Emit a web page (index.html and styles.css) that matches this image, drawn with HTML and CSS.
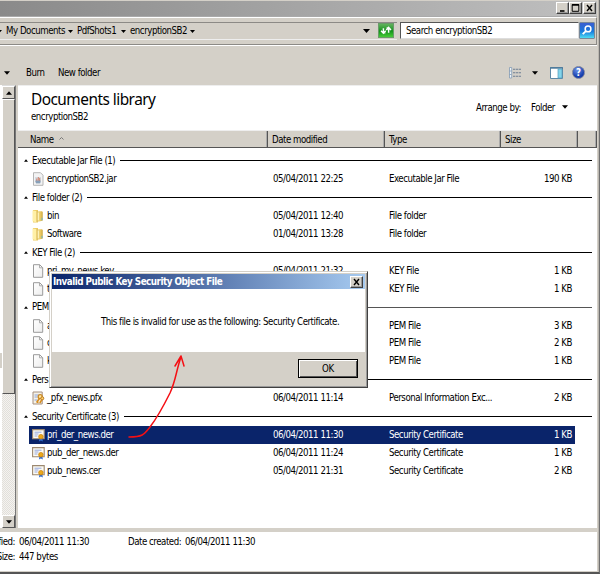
FILE: index.html
```html
<!DOCTYPE html>
<html lang="en">
<head>
<meta charset="utf-8">
<title>encryptionSB2</title>
<link rel="stylesheet" href="styles.css">
</head>
<body>
<svg class="defs" width="0" height="0">
  <defs>
    <linearGradient id="gold" x1="0" x2="1"><stop offset="0" stop-color="#fbe99b"/><stop offset="1" stop-color="#dcb545"/></linearGradient>
    <linearGradient id="paper" x1="0" y1="0" x2="1" y2="1"><stop offset="0" stop-color="#fff"/><stop offset="1" stop-color="#ededed"/></linearGradient>
  </defs>
  <symbol id="down" viewBox="0 0 7 4"><path d="M0 0h7L3.5 4z"/></symbol>
  <symbol id="file" viewBox="0 0 14 14"><path d="M1.5 .7h6.2l3 3v9.6H1.5z" fill="url(#paper)" stroke="#9a9a9a"/><path d="M7.5 .8v3h3" fill="none" stroke="#9a9a9a" stroke-width=".8"/></symbol>
  <symbol id="jar" viewBox="0 0 14 14"><path d="M1.5 .7h7l2.5 2.5v10.1H1.5z" fill="#f3f3f3" stroke="#b5b5b5"/><path d="M3 5h6v6H3z" fill="#d3dbe3"/><path d="M4.8 9V6.5M6.3 8.7V5M7.7 9V6" stroke="#d1785e" stroke-width=".9"/><path d="M3.5 9.2h5M4 10.8h4.2" stroke="#6786a5"/></symbol>
  <symbol id="folder" viewBox="0 0 14 14"><path d="M1 1h5v12.5H1z" fill="#eccb62"/><path d="M.5 1.5 4.5 2v11.5l-4-1.3z" fill="#fff0a7"/><path d="M5 2.2h5.4v9.5L5 13z" fill="url(#gold)"/><path d="M5.2 2v11M10.3 3v8.4" stroke="#c5a441" stroke-width=".7"/><path d="M6.3 3.7v7.4" stroke="#fff7c6"/><path d="M10 8.8v2.5" stroke="#6abbd1"/></symbol>
  <symbol id="pfx" viewBox="0 0 14 14"><path d="M1 1h9.2v12H1z" fill="#f5f1e6" stroke="#a58f7e"/><path d="M2.5 4h5M2.5 6h3M2.5 9h3" stroke="#8aa4df"/><circle cx="8.2" cy="5.7" r="2" fill="#ffe7a3" stroke="#cb8a26" stroke-width="1.3"/><circle cx="10.3" cy="7.3" r="1.5" fill="#ffd475" stroke="#b97719"/><path d="m7.5 7.5-3 4M10 8.5 7.8 12M4.5 10.5l2 1" fill="none" stroke="#d78d1f" stroke-width="1.5"/></symbol>
  <symbol id="cert" viewBox="0 0 14 14"><path d="M.6 1.6h11.6v9.2H.6z" fill="#fdfbf2" stroke="#9c8870" stroke-width="1.1"/><path d="M2.5 4.2h7M2.5 6h4M2.5 8h3" stroke="#7893dc" stroke-width=".8"/><path d="m7.7 9.5-.8 4 2-1 2 1-.8-4z" fill="#326fd2"/><circle cx="8.9" cy="8.7" r="2.3" fill="#eba91b" stroke="#c77d08" stroke-width=".7"/></symbol>
</svg>

<div class="window">
  <header class="titlebar">
    <div class="controls">
      <button class="ctl"><svg viewBox="0 0 11 10"><path d="M3 8h4.5" stroke="#000" stroke-width="1.6"/></svg></button>
      <button class="ctl"><svg viewBox="0 0 11 10"><path d="M2.2 1.5h6.6v6.8H2.2z" fill="none" stroke="#000"/><path d="M2 2h7" stroke="#000" stroke-width="1.5"/></svg></button>
      <button class="ctl close"><svg viewBox="0 0 11 10"><path d="m3 2 5 6M8 2 3 8" stroke="#000" stroke-width="1.4"/></svg></button>
    </div>
  </header>

  <nav class="address">
    <div class="crumbs">
      <svg class="caret c0"><use href="#down"/></svg>
      <span class="w-docs">My Documents</span><svg class="caret"><use href="#down"/></svg>
      <span class="w-pdf">PdfShots1</span><svg class="caret"><use href="#down"/></svg>
      <span class="w-enc">encryptionSB2</span><svg class="caret"><use href="#down"/></svg>
      <svg class="caret history"><use href="#down"/></svg>
    </div>
    <div class="refresh"><svg viewBox="0 0 16 15"><path d="M5 10V5M2.3 7.3 5 4.3l2.7 3M5.3 4.8h2M11 5v5M8.3 8 11 11l2.7-3M10.7 10.5h-2" transform="matrix(1 0 0 -1 0 15)" fill="none" stroke="#fff" stroke-width="1.7"/></svg></div>
    <div class="search">Search encryptionSB2</div>
    <div class="go"><svg viewBox="0 0 16 16"><circle cx="9.2" cy="6.2" r="3.3" fill="none" stroke="#fff" stroke-width="1.7"/><path d="m6.7 8.7-3.6 3.5" stroke="#fff" stroke-width="2.2"/></svg></div>
  </nav>

  <div class="toolbar">
    <svg class="caret t0"><use href="#down"/></svg>
    <span class="burn">Burn</span><span class="newf">New folder</span>
    <svg class="views" viewBox="0 0 13 12"><path d="M.5.5h2.2v10.5H.5zM.5 4h2M.5 7.5h2" fill="#eef5fa" stroke="#839bb4" stroke-width=".8"/><path d="M4 2.2h8M4 5.7h8M4 9.3h8" stroke="#6c7d92" stroke-dasharray="2.3 .6" stroke-width="1.1"/></svg>
    <svg class="caret t1"><use href="#down"/></svg>
    <svg class="pane" viewBox="0 0 13 12"><path d="M.5.5h12v11H.5z" fill="#fff" stroke="#5d88a5"/><path d="M0 1h13" stroke="#4b7799" stroke-width="1.4"/><path d="M8 2h4v9H8z" fill="#83d4ea" stroke="#559bbb" stroke-width=".7"/></svg>
    <div class="help">?</div>
  </div>

  <main class="content">
    <aside class="tree">
      <div class="tree-strip"><div class="tree-selected"></div></div>
      <div class="scroll">
        <div class="sbtn"><svg class="up"><use href="#down"/></svg></div>
        <div class="thumb"></div>
        <div class="track"></div>
        <div class="sbtn bottom"><svg class="caret"><use href="#down"/></svg></div>
      </div>
    </aside>
    <section class="library">
      <div class="heading">
        <div><h1>Documents library</h1><p>encryptionSB2</p></div>
        <div class="arrange"><span class="arr">Arrange by:</span><span class="fold">Folder</span><svg class="caret"><use href="#down"/></svg></div>
      </div>
      <div class="columns"><div class="c name">Name<svg class="sort" viewBox="0 0 5 3"><path d="m.5 2.5 2-2 2 2" fill="none" stroke="#777"/></svg></div><div class="c">Date modified</div><div class="c">Type</div><div class="c">Size</div><div class="c"></div></div>
      <div class="list">
        <div class="group"><svg><use href="#down"/></svg><span>Executable Jar File (1)</span><i></i></div>
        <div class="row"><svg><use href="#jar"/></svg><span class="n">encryptionSB2.jar</span><span class="d">05/04/2011 22:25</span><span class="t">Executable Jar File</span><span class="s">190 KB</span></div>
        <div class="group"><svg><use href="#down"/></svg><span>File folder (2)</span><i></i></div>
        <div class="row"><svg><use href="#folder"/></svg><span class="n">bin</span><span class="d">05/04/2011 12:40</span><span class="t">File folder</span><span class="s"></span></div>
        <div class="row"><svg><use href="#folder"/></svg><span class="n">Software</span><span class="d">01/04/2011 13:28</span><span class="t">File folder</span><span class="s"></span></div>
        <div class="group"><svg><use href="#down"/></svg><span>KEY File (2)</span><i></i></div>
        <div class="row"><svg><use href="#file"/></svg><span class="n">pri_my_news.key</span><span class="d">05/04/2011 21:32</span><span class="t">KEY File</span><span class="s">1 KB</span></div>
        <div class="row"><svg><use href="#file"/></svg><span class="n">t</span><span class="d"></span><span class="t">KEY File</span><span class="s">1 KB</span></div>
        <div class="group soft"><svg><use href="#down"/></svg><span>PEM</span><i></i></div>
        <div class="row"><svg><use href="#file"/></svg><span class="n">a</span><span class="d"></span><span class="t">PEM File</span><span class="s">3 KB</span></div>
        <div class="row"><svg><use href="#file"/></svg><span class="n">c</span><span class="d"></span><span class="t">PEM File</span><span class="s">2 KB</span></div>
        <div class="row"><svg><use href="#file"/></svg><span class="n">k</span><span class="d"></span><span class="t">PEM File</span><span class="s">1 KB</span></div>
        <div class="group"><svg><use href="#down"/></svg><span>Pers</span><i></i></div>
        <div class="row"><svg><use href="#pfx"/></svg><span class="n">_pfx_news.pfx</span><span class="d">06/04/2011 11:14</span><span class="t">Personal Information Exc...</span><span class="s">2 KB</span></div>
        <div class="group"><svg><use href="#down"/></svg><span>Security Certificate (3)</span><i></i></div>
        <div class="row selected"><svg><use href="#cert"/></svg><span class="n">pri_der_news.der</span><span class="d">06/04/2011 11:30</span><span class="t">Security Certificate</span><span class="s">1 KB</span></div>
        <div class="row"><svg><use href="#cert"/></svg><span class="n">pub_der_news.der</span><span class="d">06/04/2011 11:24</span><span class="t">Security Certificate</span><span class="s">1 KB</span></div>
        <div class="row"><svg><use href="#cert"/></svg><span class="n">pub_news.cer</span><span class="d">05/04/2011 21:31</span><span class="t">Security Certificate</span><span class="s">2 KB</span></div>
      </div>
    </section>
  </main>

  <footer class="details">
    <span class="lab">fied:</span><span>06/04/2011 11:30</span><span class="created">Date created:</span><span>06/04/2011 11:30</span>
    <span class="lab">Size:</span><span>447 bytes</span>
  </footer>
</div>

<div class="dialog">
  <div class="dialog-title"><b>Invalid Public Key Security Object File</b><button class="ctl"><svg viewBox="0 0 11 10"><path d="m3 2 5 6M8 2 3 8" stroke="#000" stroke-width="1.4"/></svg></button></div>
  <div class="dialog-body">This file is invalid for use as the following: Security Certificate.</div>
  <div class="dialog-foot"><button class="ok">OK</button></div>
</div>

<svg class="annotation" viewBox="0 0 600 574"><path d="M129 437c13 0 15-2 21-10 7-9 14-22 20-34 6-13 6-22 11-36M175 366l6-10 3 10" fill="none" stroke="#f50f14" stroke-width="1.5" stroke-linecap="round" stroke-linejoin="round"/></svg>
</body>
</html>
```
FILE: styles.css
```css
* { box-sizing: border-box; }
body {
  margin: 0; width: 600px; height: 574px; overflow: hidden; position: relative;
  font: 9.6px/12px "DejaVu Sans Condensed", "DejaVu Sans", sans-serif;
  font-stretch: condensed; letter-spacing: -0.46px; color: #000; background: #d4d0c8; white-space: nowrap;
}
svg { display: block; flex: none; }
.defs { position: absolute; }
span { flex: none; }
.caret { width: 6px; height: 4px; }
.window { height: 574px; display: flex; flex-direction: column; border-right: 1px solid #707070; border-bottom: 2px solid #555; box-shadow: inset -1px 0 #bbb7b0; }

.titlebar { height: 16px; flex: none; margin: 1px 2px 0 0; background: linear-gradient(90deg, #8a8a8a, #c0c0c0); display: flex; justify-content: flex-end; padding: 1px 1px 0 0; border-bottom: 1px solid #aaa; }
.controls { display: flex; }
.ctl { width: 13px; height: 12px; padding: 0; background: #d4d0c8; border: 1px solid; border-color: #fff #404040 #404040 #fff; box-shadow: inset -1px -1px #999; }
.ctl svg { width: 11px; height: 10px; }
.ctl.close { margin-left: 1px; }

.address { height: 28px; flex: none; margin-right: 2px; border-top: 1px solid #fff; border-bottom: 1px solid #8c8a86; border-right: 1px solid #8c8a86; box-shadow: 0 1px #fff; display: flex; align-items: flex-start; padding-top: 4px; }
.crumbs { height: 18px; width: 397px; display: flex; align-items: center; border-top: 1px solid #8c8a86; border-bottom: 1px solid #eee; }
.crumbs .caret { width: 5px; height: 3px; }
.c0 { margin: 0 4px 0 -3px; }
.w-docs { width: 62px; }
.w-pdf { width: 44px; margin-left: 4px; }
.w-enc { width: 60px; margin-left: 4px; }
.crumbs .history { width: 7px; height: 4px; margin-left: auto; margin-right: 27px; }
.refresh { width: 16px; height: 15px; margin: 1px 0 0 -19px; background: linear-gradient(#62b25d, #15931d 55%, #46cc36); border: 1px solid #689b68; }
.refresh svg, .go svg { width: 100%; height: 100%; }
.search { width: 179px; height: 17px; margin-left: 6px; padding: 2px 0 0 5px; background: #fff; border: 1px solid; border-color: #555 #ddd #ddd #555; }
.go { width: 16px; height: 17px; background: linear-gradient(#3b5ed0, #1779dd 55%, #4edcf4); border: 1px solid #789; border-radius: 1px; }

.toolbar { height: 40px; flex: none; display: flex; align-items: center; padding: 15px 0 0 4px; }
.burn { width: 32px; margin-left: 16px; }
.newf { width: 42px; }
.views { width: 13px; height: 12px; margin-left: 409px; }
.t1 { margin-left: 10px; }
.pane { width: 13px; height: 12px; margin-left: 12px; }
.help { width: 13px; height: 13px; margin-left: 9px; border-radius: 50%; background: radial-gradient(circle at 40% 25%, #6f94eb, #173fae 65%); border: 1px solid #777f9a; color: #fff; font-weight: bold; line-height: 11px; text-align: center; letter-spacing: 0; }

.content { height: 443px; flex: none; display: flex; margin-right: 2px; }
.tree { width: 18px; display: flex; background: #d4d0c8; }
.tree-strip { width: 2px; background: #fff; padding-top: 268px; }
.tree-selected { height: 15px; background: #d4d0c8; }
.scroll { width: 14px; display: flex; flex-direction: column; border-right: 1px solid #777; border-top: 1px solid #ddd; }
.sbtn { height: 13px; flex: none; background: #d4d0c8; border: 1px solid; border-color: #fff #555 #555 #fff; display: flex; align-items: center; justify-content: center; }
.up { width: 6px; height: 4px; transform: rotate(180deg); }
.thumb { height: 295px; background: #d4d0c8; border: 1px solid; border-color: #fff #555 #555 #fff; }
.track { flex: 1; background: repeating-conic-gradient(#f4f3f0 0 25%, #e2dfda 0 50%) 0 0 / 2px 2px; }

.library { width: 579px; background: #fff; border-top: 1px solid #eee; }
.heading { height: 44px; display: flex; justify-content: space-between; padding: 4px 29px 0 13px; }
h1 { margin: 0; font: 15.4px/20px "Noto Sans", "Open Sans", sans-serif; letter-spacing: -0.52px; }
p { margin: 1px 0 0; }
.arrange { display: flex; padding-top: 12px; }
.arrange .caret { margin-top: 3px; }
.arr { width: 55px; }
.fold { width: 31px; }
.columns { height: 18px; display: grid; grid-template-columns: 250px 117px 116px 77px 19px; background: #d4d0c8; border-bottom: 1px solid #555; border-top: 1px solid #eee; }
.c { padding: 3px 0 0 4px; border-right: 1px solid #555; box-shadow: inset -1px 0 #aaa; }
.c.name { display: flex; padding-left: 12px; }
.sort { width: 5px; height: 3px; margin: 3px 0 0 5px; }
.list { padding-top: 3.3px; }
.group { height: 19.2px; display: flex; align-items: center; padding: 0 5px 0 6px; }
.group svg { width: 4px; height: 3px; margin-right: 4px; transform: rotate(180deg); }
.group i { height: 1px; flex: 1; background: #000; margin-left: 5px; }
.group.soft i { background: #555; }
.row { height: 17.75px; width: 564px; display: flex; align-items: center; }
.row svg { width: 14px; height: 14px; margin: 0 1px 0 14px; }
.n { width: 226px; }
.d { width: 116px; }
.t { width: 116px; }
.s { width: 67px; text-align: right; }
.row.selected { width: 546px; margin-left: 11px; background: #0a246a; color: #fff; }
.selected svg { margin-left: 3px; }

.details { flex: 1; margin: 4px 2px 1px 0; background: #fff; display: grid; grid-template-columns: 19px 109px 57px 1fr; grid-template-rows: 14.5px 14px; align-content: start; padding-top: 4px; }
.details .lab { width: 15px; display: flex; justify-content: flex-end; }

.dialog { position: absolute; left: 49px; top: 271px; width: 319px; height: 117px; background: #d4d0c8; border: 1px solid; border-color: #d4d0c8 #404040 #404040 #d4d0c8; box-shadow: inset 1px 1px #fff, inset -1px -1px #999; padding: 2px; }
.dialog-title { height: 15px; display: flex; align-items: center; justify-content: space-between; padding: 0 2px 0 1px; background: linear-gradient(90deg, #0a246a, #a6caf0); color: #fff; }
.dialog-title b { font-size: 9.8px; letter-spacing: -0.51px; }
.dialog-body { height: 63px; background: #fff; display: flex; align-items: center; padding: 2px 0 0 49px; }
.dialog-foot { display: flex; justify-content: flex-end; padding: 7px 7px 0 0; }
.ok { width: 60px; height: 19px; padding: 0; font: inherit; letter-spacing: -0.2px; background: #d4d0c8; border: 1px solid #000; box-shadow: inset 1px 1px #fff, inset -1px -1px #555; }
.annotation { position: absolute; left: 0; top: 0; width: 600px; height: 574px; pointer-events: none; }
```
